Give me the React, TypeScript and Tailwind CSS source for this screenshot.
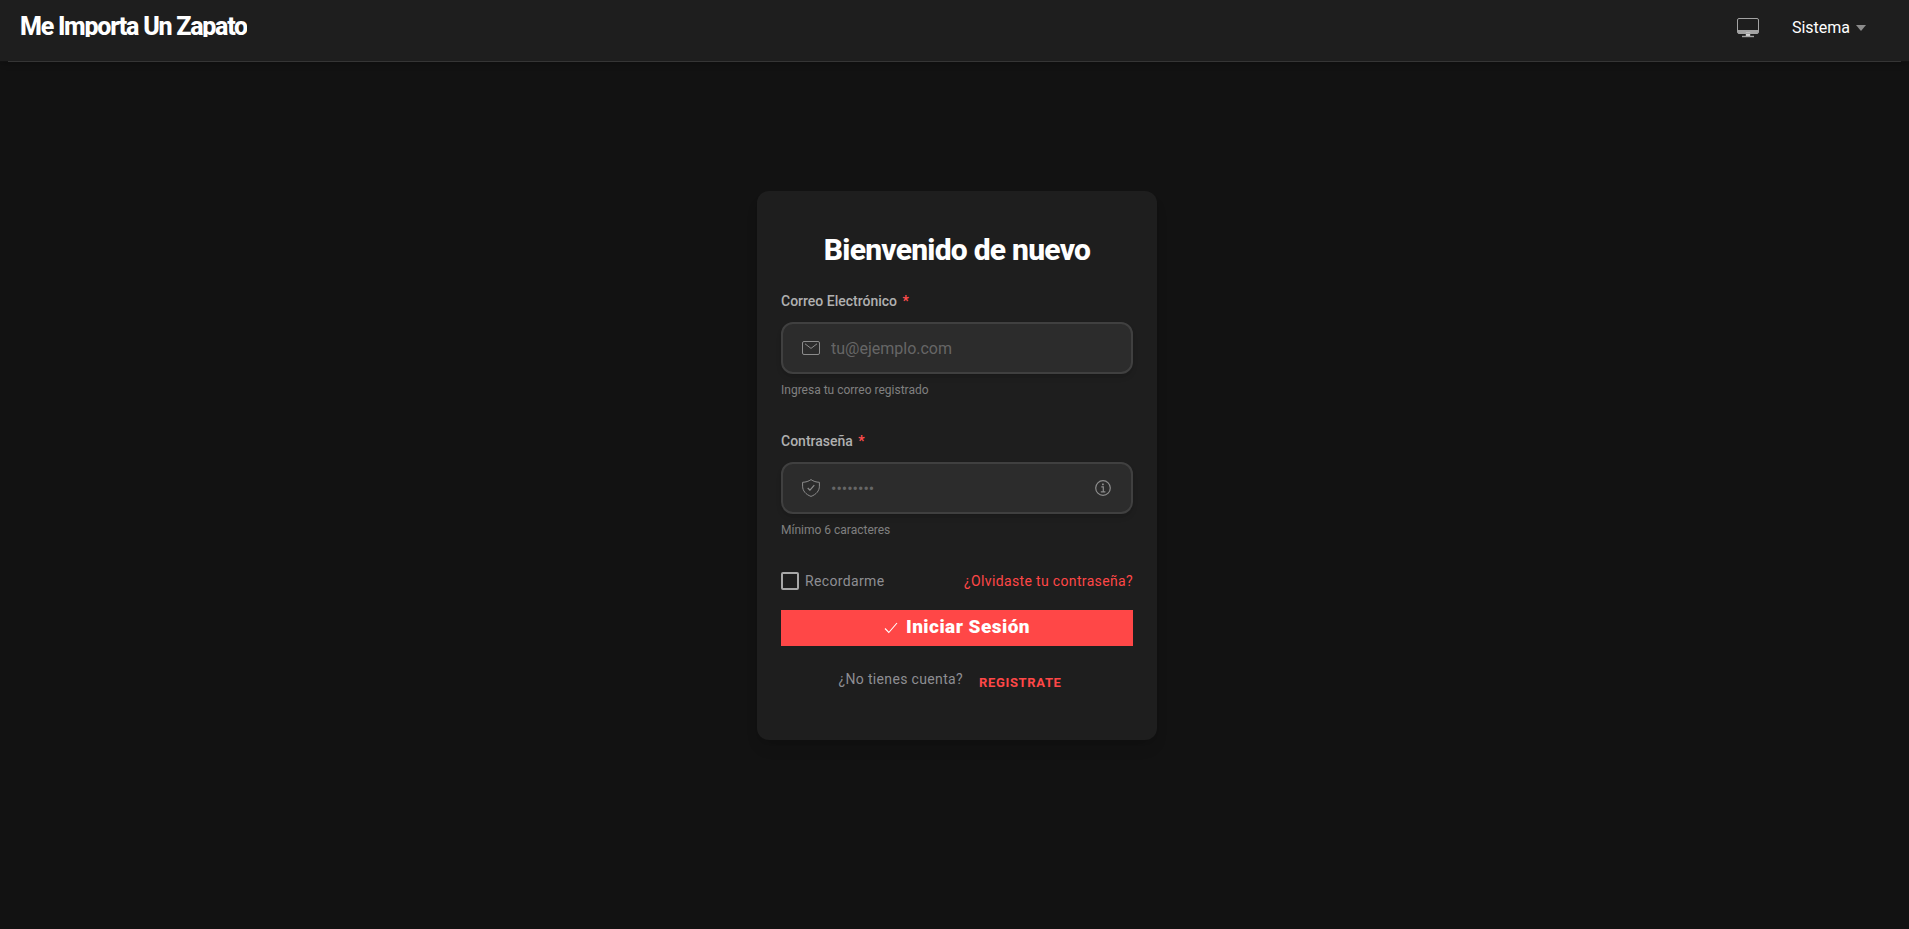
import { useId, type ReactNode } from "react";

function MonitorIcon() {
  return (
    <svg viewBox="0 0 24 24" className="h-6 w-6" fill="none" aria-hidden="true">
      <path d="M2 14h20v2.500a1 1 0 0 1-1 1H3a1 1 0 0 1-1-1z" fill="#a3a3a3" />
      <path d="M9.800 16.500h4.400v3.600H9.800z" fill="#d4d4d4" />
      <rect x="1.500" y="2.500" width="21" height="15" rx="1.500" stroke="#a3a3a3" />
      <path d="M6 20.500h12" stroke="#a3a3a3" strokeWidth="1.400" />
    </svg>
  );
}

function MailIcon() {
  return (
    <svg viewBox="0 0 18 18" className="h-[18px] w-[18px]" fill="none" stroke="currentColor" aria-hidden="true">
      <rect x="0.500" y="2.500" width="17" height="13" rx="1.500" />
      <path d="M3 4.800l6 4.600 6-4.600" />
    </svg>
  );
}

function ShieldIcon() {
  return (
    <svg viewBox="0 0 18 18" className="h-[18px] w-[18px]" fill="none" stroke="currentColor" strokeLinejoin="round" aria-hidden="true">
      <path d="M9 .6C6.600 2.300 3.800 3.200.6 3.300v3.900c0 4.600 3.200 8.300 8.400 10.200 5.200-1.900 8.400-5.600 8.400-10.200V3.300C14.200 3.200 11.400 2.300 9 .6z" />
      <path d="M5.700 9l2.300 2.200 4.300-5" strokeWidth="1.200" />
    </svg>
  );
}

function InfoIcon() {
  return (
    <svg viewBox="0 0 16 16" className="h-4 w-4" fill="none" stroke="currentColor" aria-hidden="true">
      <circle cx="8" cy="8" r="7.300" strokeWidth="1.200" />
      <path d="M6.300 6.800h2V11.500M5.800 11.800h4.600" strokeWidth="1.200" />
      <rect x="7" y="3.600" width="1.800" height="1.600" fill="currentColor" stroke="none" />
    </svg>
  );
}

function CheckIcon() {
  return (
    <svg viewBox="0 0 14 14" className="h-3.5 w-3.5" fill="none" stroke="currentColor" aria-hidden="true">
      <path d="M1 7.500l3.800 4L13 2" strokeWidth="1.100" />
    </svg>
  );
}

type FieldProps = {
  label: string;
  type: string;
  placeholder: string;
  hint: string;
  icon: ReactNode;
  action?: ReactNode;
};

function Field({ label, type, placeholder, hint, icon, action }: FieldProps) {
  const id = useId();
  return (
    <div className="flex flex-col">
      <label htmlFor={id} className="mb-[11px] text-sm font-medium text-[#b0b0b0]">
        {label} <span className="ml-0.5 font-bold text-[#ff4d4d]">*</span>
      </label>
      <div className="flex h-[52px] items-center gap-[11px] rounded-xl border-2 border-[#404040] bg-[#2c2c2c] pr-5 pl-[19px] text-[#8c8c8c] shadow-md">
        {icon}
        <input
          id={id}
          type={type}
          placeholder={placeholder}
          className="h-full min-w-0 flex-1 bg-transparent pt-px text-base text-white outline-none placeholder:text-[#666666]"
        />
        {action}
      </div>
      <p className="mt-2 text-xs text-[#808080]">{hint}</p>
    </div>
  );
}

export default function App() {
  return (
    <div className="flex min-h-screen flex-col bg-[#121212] font-['Roboto',sans-serif]">
      <header className="bg-[#1e1e1e] shadow-md">
        <div className="flex h-[61px] items-start justify-between pr-[43px] pl-5">
          <h1 className="mt-3 h-[25px] overflow-hidden text-[25px] leading-[30px] font-extrabold tracking-tighter text-white">
            Me Importa Un Zapato
          </h1>
          <nav className="mt-[15px] flex items-center gap-8">
            <button type="button" aria-label="Pantalla">
              <MonitorIcon />
            </button>
            <button type="button" className="flex items-center gap-1.5 pt-px text-base text-white">
              Sistema
              <svg viewBox="0 0 10 6" className="h-1.5 w-2.5" fill="#8c8c8c" aria-hidden="true">
                <path d="M0 0h10L5 6z" />
              </svg>
            </button>
          </nav>
        </div>
        <div className="bg-[#121212] px-2">
          <div className="h-px bg-[#353535]" />
        </div>
      </header>
      <main className="flex flex-1 items-center justify-center pl-[5px]">
        <form
          className="-mt-15 flex w-full max-w-[400px] flex-col rounded-xl bg-[#1e1e1e] px-6 pt-[41px] pb-12 shadow-lg"
          onSubmit={(event) => event.preventDefault()}
        >
          <h2 className="mb-[23px] text-center text-3xl font-extrabold tracking-tight text-white">Bienvenido de nuevo</h2>
          <div className="flex flex-col gap-[33px]">
            <Field
              label="Correo Electrónico"
              type="email"
              placeholder="tu@ejemplo.com"
              hint="Ingresa tu correo registrado"
              icon={<MailIcon />}
            />
            <Field
              label="Contraseña"
              type="password"
              placeholder="••••••••"
              hint="Mínimo 6 caracteres"
              icon={<ShieldIcon />}
              action={
                <button type="button" aria-label="Mostrar contraseña">
                  <InfoIcon />
                </button>
              }
            />
          </div>
          <div className="mt-[33px] flex items-center justify-between text-sm">
            <label className="flex items-center gap-1.5 tracking-wide text-[#8e8e93]">
              <input
                type="checkbox"
                className="h-[18px] w-[18px] appearance-none rounded-xs border-2 border-[#a8a8a8] checked:bg-[#ff4747]"
              />
              Recordarme
            </label>
            <a href="#" className="tracking-wide text-[#ff4747]">
              ¿Olvidaste tu contraseña?
            </a>
          </div>
          <button
            type="submit"
            className="mt-[19px] flex h-9 items-center justify-center gap-2 bg-[#ff4747] text-[19px] font-black tracking-wide text-white"
          >
            <CheckIcon />
            Iniciar Sesión
          </button>
          <p className="mt-5 flex items-start justify-center gap-4 pr-3.5 text-sm tracking-wide text-[#8e8e93]">
            <span className="mt-[3px]">¿No tienes cuenta?</span>
            <a href="#" className="mt-2 text-[13px] font-bold tracking-wider text-[#ff4747]">
              REGISTRATE
            </a>
          </p>
        </form>
      </main>
    </div>
  );
}
